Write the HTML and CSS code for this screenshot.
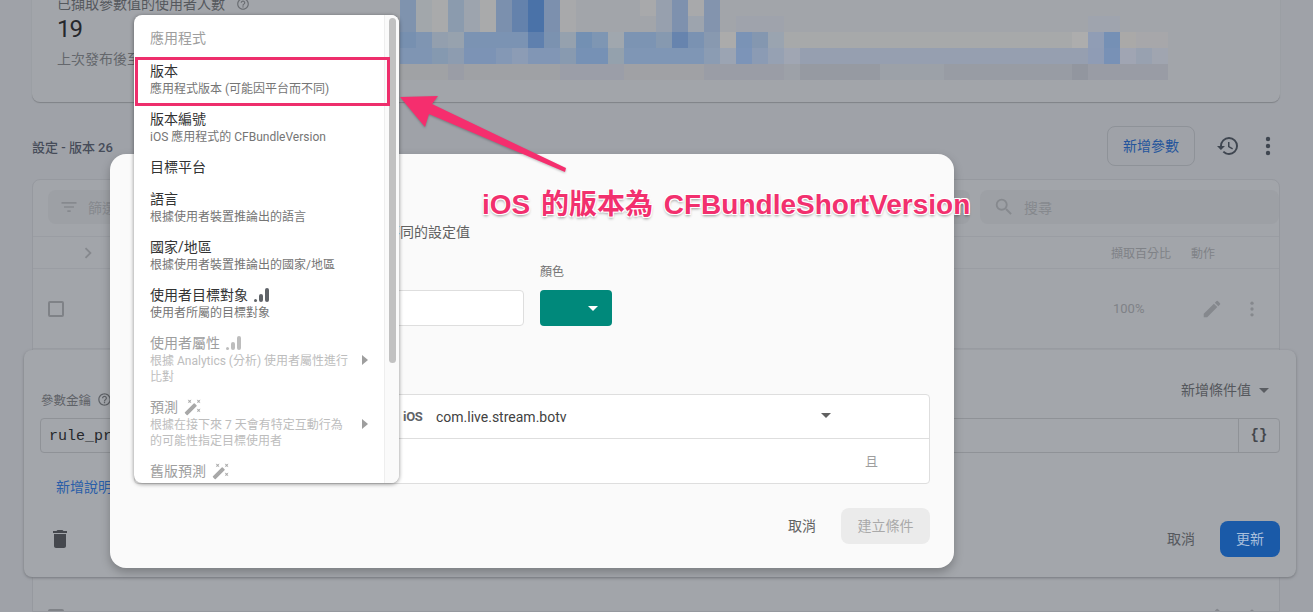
FILE: index.html
```html
<!DOCTYPE html>
<html lang="zh-Hant">
<head>
    <meta charset="UTF-8">
    <meta name="viewport" content="width=device-width, initial-scale=1.0">
    <title>Remote Config</title>
    <link rel="stylesheet" href="styles.css">
</head>
<body>

<div class="page">
    <section class="summary">
        <div class="summary-stats">
            <div class="stat-label">已擷取參數值的使用者人數
                <svg class="help-icon" viewBox="0 0 24 24"><path d="M11 18h2v-2h-2v2zm1-16C6.48 2 2 6.48 2 12s4.48 10 10 10 10-4.48 10-10S17.52 2 12 2zm0 18c-4.41 0-8-3.59-8-8s3.59-8 8-8 8 3.59 8 8-3.59 8-8 8zm0-14c-2.21 0-4 1.79-4 4h2c0-1.1.9-2 2-2s2 .9 2 2c0 2-3 1.75-3 5h2c0-2.25 3-2.5 3-5 0-2.21-1.79-4-4-4z"/></svg>
            </div>
            <div class="stat-value">19</div>
            <div class="stat-note">上次發布後至今的使用者</div>
        </div>
        <svg class="mosaic" viewBox="400 0 770 80" shape-rendering="crispEdges">
            <!-- rows 0-32 -->
            <rect x="400" y="0" width="16" height="32" fill="#7f93ae"/>
            <rect x="416" y="0" width="16" height="32" fill="#a2a7ab"/>
            <rect x="432" y="0" width="16" height="32" fill="#a9aaab"/>
            <rect x="448" y="0" width="16" height="32" fill="#8b9bae"/>
            <rect x="464" y="0" width="16" height="32" fill="#9da4ae"/>
            <rect x="480" y="0" width="16" height="32" fill="#a9aaab"/>
            <rect x="496" y="0" width="16" height="32" fill="#7b90ae"/>
            <rect x="512" y="0" width="16" height="32" fill="#6482ac"/>
            <rect x="528" y="0" width="16" height="32" fill="#4a72a8"/>
            <rect x="544" y="0" width="16" height="32" fill="#7c90ae"/>
            <rect x="560" y="0" width="16" height="32" fill="#a8a9ab"/>
            <rect x="640" y="0" width="16" height="16" fill="#a8a9ab"/>
            <rect x="656" y="0" width="16" height="32" fill="#97a0ae"/>
            <rect x="672" y="0" width="16" height="32" fill="#7e91ae"/>
            <rect x="688" y="0" width="16" height="16" fill="#a8a9ab"/>
            <rect x="688" y="16" width="16" height="16" fill="#9da4ae"/>
            <rect x="704" y="0" width="16" height="32" fill="#8394ae"/>
            <rect x="736" y="16" width="48" height="16" fill="#9fa3ac"/>
            <rect x="1088" y="16" width="32" height="16" fill="#9fa4ae"/>
            <!-- row 32-48 -->
            <rect x="400" y="32" width="16" height="16" fill="#7790b0"/>
            <rect x="416" y="32" width="16" height="16" fill="#7f95b2"/>
            <rect x="432" y="32" width="16" height="16" fill="#939fae"/>
            <rect x="448" y="32" width="16" height="16" fill="#97a2ae"/>
            <rect x="464" y="32" width="64" height="16" fill="#7b93b3"/>
            <rect x="528" y="32" width="16" height="16" fill="#5f80ae"/>
            <rect x="544" y="32" width="16" height="16" fill="#7b92b0"/>
            <rect x="560" y="32" width="16" height="16" fill="#95a1ae"/>
            <rect x="576" y="32" width="16" height="16" fill="#7390b3"/>
            <rect x="592" y="32" width="16" height="16" fill="#7e96b3"/>
            <rect x="608" y="32" width="16" height="16" fill="#a0a7ae"/>
            <rect x="624" y="32" width="32" height="16" fill="#7c94b3"/>
            <rect x="656" y="32" width="16" height="16" fill="#8699b0"/>
            <rect x="672" y="32" width="16" height="16" fill="#6784ae"/>
            <rect x="688" y="32" width="16" height="16" fill="#7a92b2"/>
            <rect x="704" y="32" width="16" height="16" fill="#8899b0"/>
            <rect x="720" y="32" width="16" height="16" fill="#ababab"/>
            <rect x="736" y="32" width="16" height="16" fill="#7a93b6"/>
            <rect x="752" y="32" width="16" height="16" fill="#8497b0"/>
            <rect x="768" y="32" width="16" height="16" fill="#9aa4b0"/>
            <rect x="784" y="32" width="288" height="16" fill="#a7a9aa"/>
            <rect x="1072" y="32" width="16" height="16" fill="#adadad"/>
            <rect x="1088" y="32" width="16" height="16" fill="#909db5"/>
            <rect x="1104" y="32" width="16" height="16" fill="#7590b5"/>
            <rect x="1120" y="32" width="16" height="16" fill="#aaa9a8"/>
            <rect x="1136" y="32" width="32" height="16" fill="#a7a7aa"/>
            <!-- row 48-64 -->
            <rect x="400" y="48" width="32" height="16" fill="#7f95b3"/>
            <rect x="432" y="48" width="16" height="16" fill="#8599b0"/>
            <rect x="448" y="48" width="16" height="16" fill="#8d9cb0"/>
            <rect x="464" y="48" width="32" height="16" fill="#7c93b5"/>
            <rect x="496" y="48" width="16" height="16" fill="#8498b5"/>
            <rect x="512" y="48" width="16" height="16" fill="#8c9cb5"/>
            <rect x="528" y="48" width="32" height="16" fill="#8196b5"/>
            <rect x="560" y="48" width="16" height="16" fill="#889ab0"/>
            <rect x="576" y="48" width="32" height="16" fill="#7691b5"/>
            <rect x="608" y="48" width="16" height="16" fill="#94a1ad"/>
            <rect x="624" y="48" width="80" height="16" fill="#7f96b5"/>
            <rect x="704" y="48" width="16" height="16" fill="#8b9cb3"/>
            <rect x="720" y="48" width="16" height="16" fill="#9ba4b3"/>
            <rect x="736" y="48" width="16" height="16" fill="#7c94b8"/>
            <rect x="752" y="48" width="16" height="16" fill="#8b9bb4"/>
            <rect x="768" y="48" width="16" height="16" fill="#96a1b3"/>
            <rect x="784" y="48" width="16" height="16" fill="#a0a6b3"/>
            <rect x="800" y="48" width="288" height="16" fill="#969fb0"/>
            <rect x="1088" y="48" width="16" height="16" fill="#8f9cb5"/>
            <rect x="1104" y="48" width="16" height="16" fill="#7891b6"/>
            <rect x="1120" y="48" width="16" height="16" fill="#a0a5b3"/>
            <rect x="1136" y="48" width="16" height="16" fill="#98a1b0"/>
            <rect x="1152" y="48" width="16" height="16" fill="#a0a5b0"/>
            <!-- row 64-80 -->
            <rect x="400" y="64" width="48" height="16" fill="#a0a2a5"/>
            <rect x="448" y="64" width="16" height="16" fill="#9a9da6"/>
            <rect x="464" y="64" width="96" height="16" fill="#9fa1a5"/>
            <rect x="560" y="64" width="64" height="16" fill="#9b9ea8"/>
            <rect x="624" y="64" width="80" height="16" fill="#a0a1a5"/>
            <rect x="704" y="64" width="80" height="16" fill="#9a9da6"/>
            <rect x="784" y="64" width="16" height="16" fill="#9da1a8"/>
            <rect x="800" y="64" width="80" height="16" fill="#969aa2"/>
            <rect x="880" y="64" width="64" height="16" fill="#9ca1a8"/>
            <rect x="944" y="64" width="128" height="16" fill="#989ca4"/>
            <rect x="1072" y="64" width="16" height="16" fill="#92969f"/>
            <rect x="1088" y="64" width="80" height="16" fill="#999ca5"/>
        </svg>
    </section>

    <div class="config-bar">
        <span class="config-title">設定 - 版本 26</span>
        <div class="config-actions">
            <button class="outline-btn">新增參數</button>
            <svg class="history-icon" viewBox="0 0 24 24"><path d="M13 3a9 9 0 0 0-9 9H1l3.89 3.89.07.14L9 12H6c0-3.87 3.13-7 7-7s7 3.13 7 7-3.13 7-7 7c-1.93 0-3.68-.79-4.94-2.06l-1.42 1.42A8.954 8.954 0 0 0 13 21a9 9 0 0 0 0-18zm-1 5v5l4.28 2.54.72-1.21-3.5-2.08V8H12z"/></svg>
            <svg class="dots-icon" viewBox="0 0 24 24"><circle cx="12" cy="5" r="2.2"/><circle cx="12" cy="12" r="2.2"/><circle cx="12" cy="19" r="2.2"/></svg>
        </div>
    </div>

    <section class="table-card">
        <div class="toolbar">
            <div class="filter-box">
                <svg class="filter-icon" viewBox="0 0 24 24"><path d="M10 18h4v-2h-4v2zM3 6v2h18V6H3zm3 7h12v-2H6v2z"/></svg>
                <span>篩選</span>
            </div>
            <div class="search-box">
                <svg class="search-icon" viewBox="0 0 24 24"><path d="M15.5 14h-.79l-.28-.27A6.471 6.471 0 0 0 16 9.5 6.5 6.5 0 1 0 9.5 16c1.61 0 3.09-.59 4.23-1.57l.27.28v.79l5 4.99L20.49 19l-4.99-5zm-6 0C7.01 14 5 11.99 5 9.5S7.01 5 9.5 5 14 7.01 14 9.5 11.99 14 9.5 14z"/></svg>
                <span>搜尋</span>
            </div>
        </div>
        <div class="table-head">
            <svg class="chevron-icon" viewBox="0 0 24 24"><path d="M10 6 8.59 7.41 13.17 12l-4.58 4.59L10 18l6-6z"/></svg>
            <span class="col-percent">擷取百分比</span>
            <span class="col-action">動作</span>
        </div>
        <div class="table-row">
            <span class="checkbox"></span>
            <span class="col-percent">100%</span>
            <svg class="pencil-icon" viewBox="0 0 24 24"><path d="M3 17.25V21h3.75L17.81 9.94l-3.75-3.75L3 17.25zM20.71 7.04a1 1 0 0 0 0-1.41l-2.34-2.34a1 1 0 0 0-1.41 0l-1.83 1.83 3.75 3.75 1.83-1.83z"/></svg>
            <svg class="row-dots" viewBox="0 0 24 24"><circle cx="12" cy="5" r="2"/><circle cx="12" cy="12" r="2"/><circle cx="12" cy="19" r="2"/></svg>
        </div>
        <div class="row-expanded"></div>
        <div class="table-row">
            <span class="checkbox"></span>
            <span class="col-percent"></span>
            <svg class="pencil-icon" viewBox="0 0 24 24"><path d="M3 17.25V21h3.75L17.81 9.94l-3.75-3.75L3 17.25zM20.71 7.04a1 1 0 0 0 0-1.41l-2.34-2.34a1 1 0 0 0-1.41 0l-1.83 1.83 3.75 3.75 1.83-1.83z"/></svg>
            <svg class="row-dots" viewBox="0 0 24 24"><circle cx="12" cy="5" r="2"/><circle cx="12" cy="12" r="2"/><circle cx="12" cy="19" r="2"/></svg>
        </div>
    </section>
</div>

<!-- parameter editor, sits over the table -->
<section class="editor">
    <div class="editor-top">
        <span class="key-label">參數金鑰
            <svg class="key-help" viewBox="0 0 24 24"><path d="M11 18h2v-2h-2v2zm1-16C6.48 2 2 6.48 2 12s4.48 10 10 10 10-4.48 10-10S17.52 2 12 2zm0 18c-4.41 0-8-3.59-8-8s3.59-8 8-8 8 3.59 8 8-3.59 8-8 8zm0-14c-2.21 0-4 1.79-4 4h2c0-1.1.9-2 2-2s2 .9 2 2c0 2-3 1.75-3 5h2c0-2.25 3-2.5 3-5 0-2.21-1.79-4-4-4z"/></svg>
        </span>
        <span class="add-value">新增條件值 <i class="caret caret-editor"></i></span>
    </div>
    <div class="key-input">
        <span class="key-text">rule_pr</span>
        <span class="key-addon">{}</span>
    </div>
    <div class="add-desc">新增說明</div>
    <div class="editor-foot">
        <svg class="trash-icon" viewBox="0 0 24 24"><path d="M6 19c0 1.1.9 2 2 2h8c1.1 0 2-.9 2-2V7H6v12zM19 4h-3.5l-1-1h-5l-1 1H5v2h14V4z"/></svg>
        <span class="text-btn">取消</span>
        <button class="primary-btn">更新</button>
    </div>
</section>

<!-- create condition dialog -->
<section class="dialog">
    <h2 class="dialog-title">建立條件</h2>
    <p class="dialog-desc">定義條件並為各目標使用者群組提供各自不同的設定值</p>
    <div class="dialog-fields">
        <div class="field-name">
            <label class="field-label">名稱</label>
            <div class="name-input"></div>
        </div>
        <div class="field-color">
            <label class="field-label">顏色</label>
            <div class="color-select"><i class="caret caret-white"></i></div>
        </div>
    </div>
    <div class="section-label">符合條件時套用</div>
    <div class="cond-table">
        <div class="cond-row">
            <span class="ios-mark">iOS</span>
            <span class="bundle-id">com.live.stream.botv</span>
            <i class="caret caret-cond"></i>
        </div>
        <div class="cond-row cond-and">且</div>
    </div>
    <div class="dialog-foot">
        <span class="text-btn">取消</span>
        <button class="disabled-btn">建立條件</button>
    </div>
</section>

<!-- dropdown over the dialog -->
<div class="menu">
    <div class="menu-list">
        <div class="menu-header">應用程式</div>
        <div class="menu-item"><div class="item-title">版本</div><div class="item-sub">應用程式版本 (可能因平台而不同)</div></div>
        <div class="menu-item"><div class="item-title">版本編號</div><div class="item-sub">iOS 應用程式的 CFBundleVersion</div></div>
        <div class="menu-item"><div class="item-title">目標平台</div></div>
        <div class="menu-item"><div class="item-title">語言</div><div class="item-sub">根據使用者裝置推論出的語言</div></div>
        <div class="menu-item"><div class="item-title">國家/地區</div><div class="item-sub">根據使用者裝置推論出的國家/地區</div></div>
        <div class="menu-item">
            <div class="item-title">使用者目標對象
                <svg class="bars-icon" viewBox="0 0 16 16"><rect x="0" y="12" width="3" height="3" rx="1.5"/><rect x="5" y="7" width="4" height="8" rx="2"/><rect x="11" y="1" width="4" height="14" rx="2"/></svg>
            </div>
            <div class="item-sub">使用者所屬的目標對象</div>
        </div>
        <div class="menu-item is-disabled has-arrow">
            <div class="item-body">
                <div class="item-title">使用者屬性
                    <svg class="bars-icon" viewBox="0 0 16 16"><rect x="0" y="12" width="3" height="3" rx="1.5"/><rect x="5" y="7" width="4" height="8" rx="2"/><rect x="11" y="1" width="4" height="14" rx="2"/></svg>
                </div>
                <div class="item-sub">根據 Analytics (分析) 使用者屬性進行比對</div>
            </div>
            <i class="arrow-right"></i>
        </div>
        <div class="menu-item is-disabled has-arrow">
            <div class="item-body">
                <div class="item-title">預測
                    <svg class="wand-icon" viewBox="0 0 24 24"><path d="M7.5 5.6 10 7 8.6 4.5 10 2 7.5 3.4 5 2l1.4 2.5L5 7zm12 9.8L17 14l1.4 2.5L17 19l2.5-1.4L22 19l-1.4-2.5L22 14zM22 2l-2.5 1.4L17 2l1.4 2.5L17 7l2.5-1.4L22 7l-1.4-2.5zm-7.63 5.29a.996.996 0 0 0-1.41 0L1.29 18.96a.996.996 0 0 0 0 1.41l2.34 2.34c.39.39 1.02.39 1.41 0L16.7 11.05a.996.996 0 0 0 0-1.41l-2.33-2.35z"/></svg>
                </div>
                <div class="item-sub">根據在接下來 7 天會有特定互動行為的可能性指定目標使用者</div>
            </div>
            <i class="arrow-right"></i>
        </div>
        <div class="menu-item is-dim">
            <div class="item-title">舊版預測
                <svg class="wand-icon" viewBox="0 0 24 24"><path d="M7.5 5.6 10 7 8.6 4.5 10 2 7.5 3.4 5 2l1.4 2.5L5 7zm12 9.8L17 14l1.4 2.5L17 19l2.5-1.4L22 19l-1.4-2.5L22 14zM22 2l-2.5 1.4L17 2l1.4 2.5L17 7l2.5-1.4L22 7l-1.4-2.5zm-7.63 5.29a.996.996 0 0 0-1.41 0L1.29 18.96a.996.996 0 0 0 0 1.41l2.34 2.34c.39.39 1.02.39 1.41 0L16.7 11.05a.996.996 0 0 0 0-1.41l-2.33-2.35z"/></svg>
            </div>
        </div>
    </div>
    <div class="menu-scroll"><div class="menu-thumb"></div></div>
</div>

<!-- screenshot annotations -->
<div class="mark-box"></div>
<svg class="mark-arrow" viewBox="0 0 180 90"><polygon points="4,9 42,8 36,16 170,80 169,84 33,26 29,39"/></svg>
<div class="mark-text">iOS 的版本為 CFBundleShortVersion</div>

</body>
</html>
```

FILE: styles.css
```css
* {
    box-sizing: border-box;
}
body {
    margin: 0;
    height: 612px;
    overflow: hidden;
    position: relative;
    background: #9fa2a8;
    font-family: Roboto, "Noto Sans CJK TC", sans-serif;
    font-size: 14px;
    color: #212121;
}
svg {
    display: block;
    flex: none;
}
button {
    font-family: inherit;
    font-size: 14px;
    border: none;
    padding: 0 0 2px;
}
.page {
    height: 612px;
    overflow: hidden;
    padding: 0 33px 0 32px;
}

/* summary card */
.summary {
    display: flex;
    height: 132px;
    margin-top: -30px;
    background: #a2a5aa;
    border-radius: 0 0 8px 8px;
    box-shadow: 0 1px 1px #7f8287;
}
.summary-stats {
    width: 368px;
    padding: 24px 0 0 25px;
}
.stat-label {
    display: flex;
    align-items: center;
    line-height: 20px;
    color: #55585d;
}
.help-icon {
    width: 14px;
    height: 14px;
    margin-left: 11px;
    fill: #6a6d72;
}
.stat-value {
    font-size: 24px;
    line-height: 28px;
    margin-top: 1px;
    letter-spacing: -1px;
    color: #26282c;
}
.stat-note {
    line-height: 20px;
    margin-top: 6px;
    color: #64676c;
    white-space: nowrap;
}
.mosaic {
    width: 770px;
    height: 80px;
    margin-top: 30px;
}

/* config title row */
.config-bar {
    display: flex;
    align-items: center;
    justify-content: space-between;
    height: 77px;
    padding-top: 13px;
    padding-bottom: 2px;
}
.config-title {
    font-size: 13px;
    font-weight: 500;
    color: #464c59;
}
.config-actions {
    display: flex;
    align-items: center;
}
.outline-btn {
    width: 88px;
    height: 40px;
    background: none;
    border: 1px solid #8e9298;
    border-radius: 8px;
    color: #24559c;
}
.history-icon {
    width: 24px;
    height: 24px;
    margin-left: 21px;
    fill: #3f4650;
}
.dots-icon {
    width: 24px;
    height: 24px;
    margin: 0 0 0 16px;
    fill: #3f4650;
}

/* table behind the dialogs */
.table-card {
    border: 1px solid #96999f;
    border-radius: 8px 8px 0 0;
    background: #a2a5aa;
    height: 433px;
    overflow: hidden;
}
.toolbar {
    display: flex;
    gap: 10px;
    height: 57px;
    padding: 10px 0 0 15px;
    border-bottom: 1px solid #9a9da3;
}
.filter-box,
.search-box {
    display: flex;
    align-items: center;
    height: 34px;
    background: #9da0a5;
    border-radius: 8px;
    color: #86898e;
}
.filter-box {
    flex: 1;
    padding-left: 11px;
}
.search-box {
    width: 299px;
    padding-left: 13px;
}
.filter-icon {
    width: 20px;
    height: 20px;
    margin-right: 9px;
    fill: #86898e;
}
.search-icon {
    width: 22px;
    height: 22px;
    margin-right: 9px;
    fill: #86898e;
}
.table-head,
.table-row {
    display: flex;
    align-items: center;
    padding-left: 15px;
    border-bottom: 1px solid #9a9da3;
    color: #7f8287;
}
.table-head {
    height: 32px;
    font-size: 12px;
}
.table-row {
    height: 80px;
    font-size: 13px;
}
.chevron-icon {
    width: 22px;
    height: 22px;
    margin-left: 29px;
    fill: #85888d;
}
.col-percent {
    width: 80px;
    margin-left: auto;
}
.table-row .col-percent {
    width: 88px;
}
.col-action {
    width: 88px;
}
.checkbox {
    width: 16px;
    height: 16px;
    border: 2px solid #7f8287;
    border-radius: 2px;
}
.pencil-icon {
    width: 22px;
    height: 22px;
    fill: #85888d;
}
.row-dots {
    width: 20px;
    height: 20px;
    margin: 0 17px 0 19px;
    fill: #85888d;
}
.row-expanded {
    height: 228px;
}

/* parameter editor panel */
.editor {
    position: absolute;
    left: 24px;
    top: 350px;
    width: 1272px;
    height: 227px;
    padding: 28px 16px 20px;
    background: #a3a6ab;
    border-radius: 8px;
    box-shadow: 0 1px 3px #75787d;
}
.editor-top {
    display: flex;
    justify-content: space-between;
    height: 31px;
    margin-bottom: 9px;
}
.key-label {
    display: flex;
    align-items: center;
    align-self: flex-end;
    height: 20px;
    font-size: 12.5px;
    color: #5f6267;
    margin-left: 1px;
}
.key-help {
    width: 15px;
    height: 15px;
    margin-left: 6px;
    fill: #5f6267;
}
.add-value {
    display: flex;
    align-items: center;
    height: 22px;
    color: #55585d;
    padding-right: 11px;
}
.caret {
    display: inline-block;
    width: 0;
    height: 0;
    border-left: 5px solid transparent;
    border-right: 5px solid transparent;
    border-top: 5px solid #5a5d62;
}
.caret-editor {
    margin-left: 8px;
    margin-top: 2px;
}
.key-input {
    display: flex;
    align-items: center;
    justify-content: space-between;
    height: 35px;
    border: 1px solid #8f9297;
    border-radius: 4px;
}
.key-text {
    padding: 1px 0 0 8px;
    font-family: "Liberation Mono", monospace;
    font-size: 15px;
    color: #26282c;
}
.key-addon {
    width: 41px;
    height: 33px;
    border-left: 1px solid #8f9297;
    text-align: center;
    line-height: 32px;
    font-family: "Liberation Mono", monospace;
    font-weight: 700;
    color: #44474c;
}
.add-desc {
    margin: 24px 0 0 16px;
    line-height: 20px;
    color: #2a5ea8;
}
.editor-foot {
    display: flex;
    align-items: center;
    height: 36px;
    margin-top: 24px;
}
.trash-icon {
    width: 24px;
    height: 24px;
    margin-left: 8px;
    margin-right: auto;
    fill: #45484e;
}
.primary-btn {
    width: 60px;
    height: 36px;
    margin-left: 25px;
    border-radius: 8px;
    background: #1a5aa8;
    color: #a8bfdc;
}
.text-btn {
    color: #55585d;
    padding-bottom: 2px;
}

/* condition dialog */
.dialog {
    position: absolute;
    left: 110px;
    top: 154px;
    width: 844px;
    height: 414px;
    padding: 24px 24px;
    background: #fafafa;
    border-radius: 16px;
    box-shadow: 0 4px 10px rgba(0, 0, 0, 0.25);
}
.dialog-title {
    margin: 0 0 16px;
    font-size: 18px;
    font-weight: 400;
    line-height: 28px;
}
.dialog-desc {
    margin: 0 0 22px;
    line-height: 20px;
    color: #616161;
    white-space: nowrap;
}
.dialog-fields {
    display: flex;
    gap: 16px;
}
.field-name {
    width: 390px;
}
.field-color {
    width: 72px;
}
.field-label {
    display: block;
    margin-bottom: 10px;
    font-size: 12px;
    line-height: 16px;
    color: #757575;
}
.name-input {
    height: 36px;
    background: #fff;
    border: 1px solid #dedede;
    border-radius: 4px;
}
.color-select {
    display: flex;
    align-items: center;
    justify-content: flex-end;
    height: 36px;
    padding-right: 14px;
    background: #00897b;
    border-radius: 4px;
}
.caret-white {
    border-top-color: #fff;
}
.section-label {
    margin: 30px 0 18px;
    line-height: 20px;
    color: #616161;
}
.cond-table {
    height: 90px;
    background: #fff;
    border: 1px solid #dedede;
    border-radius: 4px;
}
.cond-row {
    display: flex;
    align-items: center;
    height: 44px;
    padding-left: 268px;
    border-bottom: 1px solid #dedede;
}
.ios-mark {
    width: 33px;
    font-size: 13px;
    font-weight: 700;
    letter-spacing: -0.3px;
    color: #5f6368;
}
.bundle-id {
    color: #424242;
    width: 385px;
}
.caret-cond {
    margin-top: -3px;
    border-top-color: #616161;
}
.cond-and {
    justify-content: flex-end;
    padding-right: 51px;
    padding-bottom: 2px;
    border-bottom: none;
    height: 44px;
    font-size: 13px;
    color: #9e9e9e;
}
.dialog-foot {
    display: flex;
    align-items: center;
    justify-content: flex-end;
    height: 36px;
    margin-top: 24px;
}
.dialog-foot .text-btn {
    color: #616161;
}
.disabled-btn {
    width: 89px;
    height: 36px;
    margin-left: 25px;
    border-radius: 8px;
    background: #ebebeb;
    color: #a9a9a9;
}

/* dropdown menu */
.menu {
    position: absolute;
    left: 134px;
    top: 15px;
    width: 265px;
    height: 468px;
    display: flex;
    background: #fff;
    border-radius: 8px;
    overflow: hidden;
    box-shadow: 0 1px 4px rgba(0, 0, 0, 0.45);
}
.menu-list {
    width: 250px;
}
.menu-scroll {
    width: 15px;
    padding: 3px 3px 0 4px;
    background: #fafafa;
    border-left: 1px solid #eeeeee;
}
.menu-thumb {
    height: 345px;
    background: #c1c1c1;
    border-radius: 4px;
}
.menu-header {
    height: 44px;
    padding: 14px 16px 0;
    line-height: 18px;
    color: #9e9e9e;
}
.menu-item {
    padding: 3px 16px 10px;
}
.has-arrow {
    display: flex;
    align-items: center;
}
.item-body {
    width: 200px;
}
.item-title {
    display: flex;
    align-items: center;
    line-height: 18px;
    margin-bottom: 1px;
    color: #333333;
}
.item-sub {
    font-size: 12px;
    line-height: 16px;
    color: #757575;
}
.is-disabled .item-title,
.is-dim .item-title {
    color: #9e9e9e;
}
.is-disabled .item-sub {
    color: #bdbdbd;
}
.bars-icon {
    width: 16px;
    height: 16px;
    margin-left: 6px;
    fill: #5f6368;
}
.is-disabled .bars-icon {
    fill: #bdbdbd;
}
.wand-icon {
    width: 18px;
    height: 18px;
    margin-left: 6px;
    fill: #a8a8a8;
}
.arrow-right {
    width: 0;
    height: 0;
    margin-left: auto;
    border-top: 5px solid transparent;
    border-bottom: 5px solid transparent;
    border-left: 6px solid #9e9e9e;
}

/* annotations */
.mark-box {
    position: absolute;
    left: 135px;
    top: 57px;
    width: 255px;
    height: 49px;
    border: 3px solid #ee2e6c;
}
.mark-arrow {
    position: absolute;
    left: 396px;
    top: 88px;
    width: 180px;
    height: 90px;
    fill: #f52e6e;
    filter: drop-shadow(0 1px 1px rgba(0, 0, 0, 0.25));
}
.mark-text {
    position: absolute;
    left: 482px;
    top: 188px;
    font-family: "Liberation Sans", "Noto Sans CJK TC", sans-serif;
    font-size: 28px;
    font-weight: 700;
    line-height: 34px;
    word-spacing: 3px;
    white-space: nowrap;
    color: #f2306e;
    text-shadow: 1px 1px 0 #fff, -1px -1px 0 #fff, 1px -1px 0 #fff, -1px 1px 0 #fff, 0 2px 3px rgba(0, 0, 0, 0.4);
}
```
